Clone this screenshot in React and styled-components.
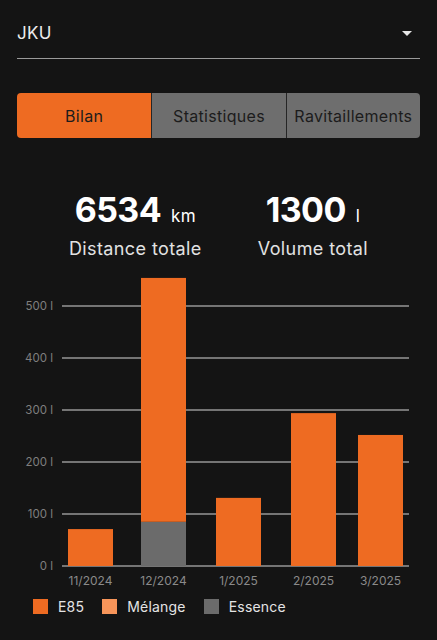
import React, { useState } from 'react';
import styled, { createGlobalStyle } from 'styled-components';

const GlobalStyle = createGlobalStyle`
  html, body {
    margin: 0;
    padding: 0;
    background: #141414;
    font-family: Inter, "Noto Sans", "Liberation Sans", sans-serif;
  }
`;

const Page = styled.div`
  width: 437px;
  min-height: 640px;
  background: #141414;
  display: flex;
  flex-direction: column;
`;

const Select = styled.div`
  margin: 0 17px;
  height: 59px;
  box-sizing: border-box;
  padding-top: 8px;
  border-bottom: 1px solid #9a9a9a;
  display: flex;
  align-items: center;
  justify-content: space-between;
`;

const SelectValue = styled.span`
  color: #ececec;
  font-size: 17px;
  letter-spacing: 0.3px;
`;

const Caret = styled.span`
  width: 0;
  height: 0;
  margin-right: 8px;
  border-left: 5.5px solid transparent;
  border-right: 5.5px solid transparent;
  border-top: 5px solid #e6e6e6;
`;

const Tabs = styled.div`
  margin: 34px 17px 0;
  height: 45px;
  display: grid;
  grid-template-columns: repeat(3, 1fr);
  border-radius: 4px;
  overflow: hidden;
`;

const Tab = styled.button`
  border: none;
  border-left: ${p => (p.$first ? 'none' : '1px solid #262626')};
  background: ${p => (p.$active ? '#ee6b22' : '#6e6e6e')};
  color: #1c1c1c;
  font-family: inherit;
  font-size: 16px;
  letter-spacing: 0.3px;
  padding: 0;
  cursor: pointer;
`;

const Stats = styled.div`
  display: flex;
  justify-content: center;
  gap: 56px;
  margin-top: 52px;
`;

const Stat = styled.div`
  display: flex;
  flex-direction: column;
  align-items: center;
`;

const Value = styled.div`
  color: #ffffff;
  font-size: 34px;
  font-weight: 700;
  letter-spacing: -0.6px;
  line-height: 40px;
`;

const Unit = styled.span`
  font-size: 17px;
  font-weight: 400;
  letter-spacing: 0.3px;
  margin-left: 10px;
`;

const Label = styled.div`
  color: #e2e2e2;
  font-size: 18px;
  letter-spacing: 0.4px;
  line-height: 22px;
  margin-top: 2px;
`;

const Chart = styled.svg`
  display: block;
  margin-top: 11px;
`;

const Legend = styled.div`
  display: flex;
  align-items: center;
  gap: 18px;
  padding-left: 33px;
  margin-top: 9px;
`;

const LegendItem = styled.div`
  display: flex;
  align-items: center;
  gap: 10px;
  color: #e4e4e4;
  font-size: 14px;
  letter-spacing: 0.2px;
`;

const Swatch = styled.span`
  width: 15px;
  height: 15px;
  background: ${p => p.$color};
`;

const COLORS = { e85: '#ee6b22', melange: '#f7955a', essence: '#6b6b6b' };

const months = [
  { label: '11/2024', x: 68, e85: 71, melange: 0, essence: 0 },
  { label: '12/2024', x: 141, e85: 469, melange: 0, essence: 85 },
  { label: '1/2025', x: 216, e85: 131, melange: 0, essence: 0 },
  { label: '2/2025', x: 291, e85: 294, melange: 0, essence: 0 },
  { label: '3/2025', x: 358, e85: 252, melange: 0, essence: 0 },
];

// chart coords: zero line at y=295, 0.52px per litre
const ZERO = 295;
const SCALE = 0.52;
const BAR_W = 45;

function BarChart() {
  const ticks = [0, 100, 200, 300, 400, 500];
  return (
    <Chart width="437" height="318" viewBox="0 0 437 318">
      {ticks.map(t => {
        const y = ZERO - t * SCALE;
        return (
          <g key={t}>
            <line x1="62" x2="409" y1={y} y2={y} stroke="#d6d6d6" strokeWidth="1" />
            <text x="53" y={y + 4} textAnchor="end" fontSize="11.5" fill="#7f7f7f" fontFamily="Inter, sans-serif">
              {t + ' l'}
            </text>
          </g>
        );
      })}
      {months.map(m => {
        let base = ZERO;
        const parts = ['essence', 'melange', 'e85'].filter(k => m[k] > 0);
        return (
          <g key={m.label}>
            {parts.map(k => {
              const h = m[k] * SCALE;
              base -= h;
              return <rect key={k} x={m.x} y={base} width={BAR_W} height={h} fill={COLORS[k]} />;
            })}
            <text x={m.x + BAR_W / 2} y={ZERO + 19} textAnchor="middle" fontSize="12" fill="#8a8a8a" fontFamily="Inter, sans-serif">
              {m.label}
            </text>
          </g>
        );
      })}
    </Chart>
  );
}

export default function App() {
  const [tab, setTab] = useState(0);
  const tabs = ['Bilan', 'Statistiques', 'Ravitaillements'];
  return (
    <>
      <GlobalStyle />
      <Page>
        <Select>
          <SelectValue>JKU</SelectValue>
          <Caret />
        </Select>
        <Tabs>
          {tabs.map((t, i) => (
            <Tab key={t} $first={i === 0} $active={tab === i} onClick={() => setTab(i)}>{t}</Tab>
          ))}
        </Tabs>
        <Stats>
          <Stat>
            <Value>6534<Unit>km</Unit></Value>
            <Label>Distance totale</Label>
          </Stat>
          <Stat>
            <Value>1300<Unit>l</Unit></Value>
            <Label>Volume total</Label>
          </Stat>
        </Stats>
        <BarChart />
        <Legend>
          <LegendItem><Swatch $color={COLORS.e85} />E85</LegendItem>
          <LegendItem><Swatch $color={COLORS.melange} />Mélange</LegendItem>
          <LegendItem><Swatch $color={COLORS.essence} />Essence</LegendItem>
        </Legend>
      </Page>
    </>
  );
}
